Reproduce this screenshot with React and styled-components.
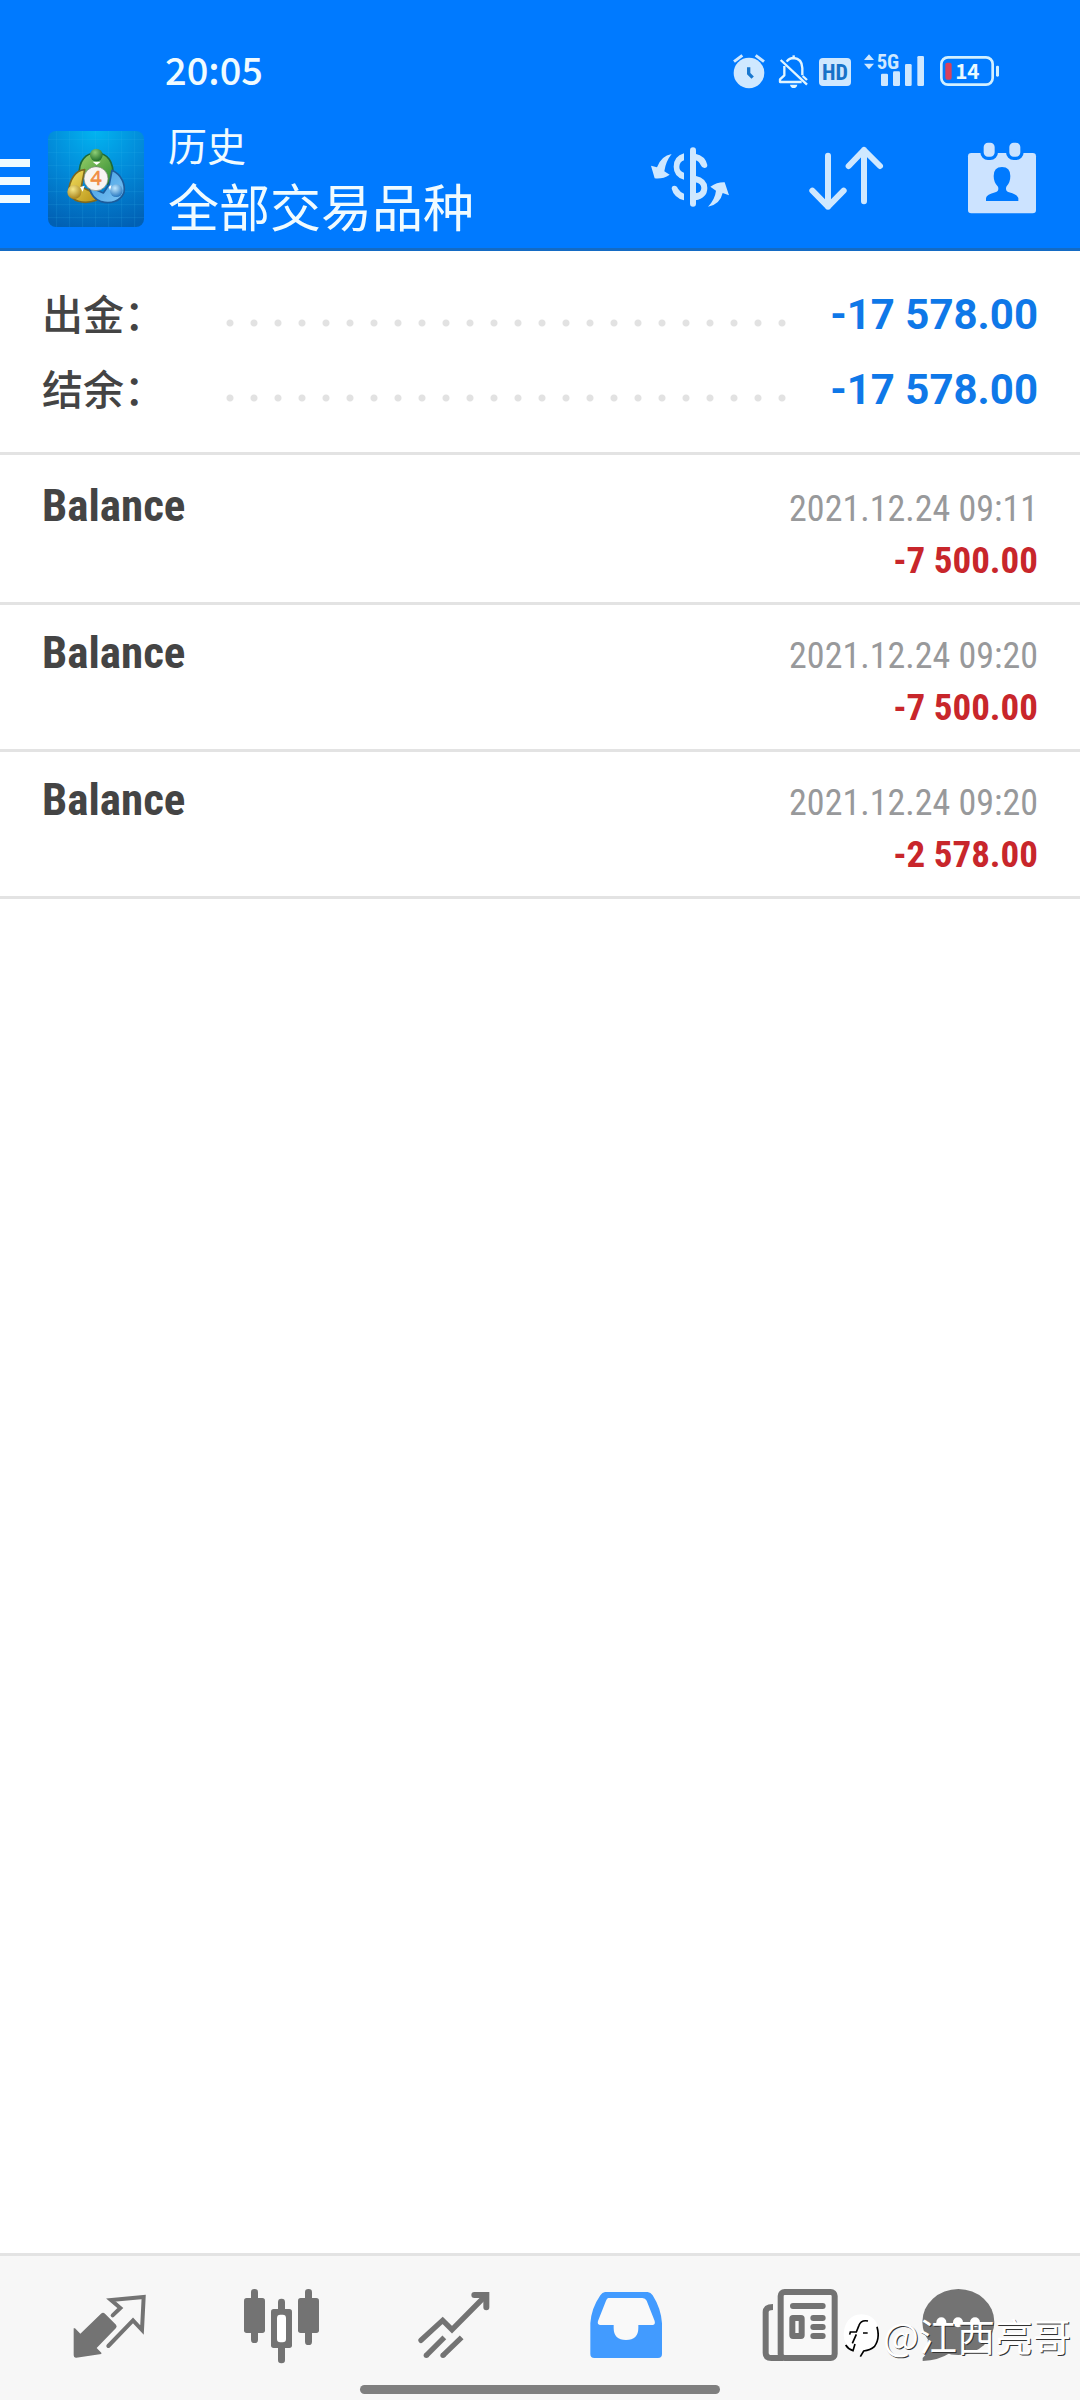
import React from "react";
import styled, { createGlobalStyle } from "styled-components";

const cjk = `"Noto Sans CJK SC", sans-serif`;
const roboto = `Roboto, "Noto Sans CJK SC", sans-serif`;
const condensed = `"Roboto Condensed", Roboto, sans-serif`;

const blue = "#007aff";
const pale = "#cfe8ff";
const ink = "#444444";
const grey = "#737373";
const rule = "#e3e3e3";

const GlobalStyle = createGlobalStyle`
  * { box-sizing: border-box; }
  body { margin: 0; background: #ffffff; font-family: ${cjk}; }
  button { padding: 0; border: 0; background: none; cursor: pointer; }
  svg { display: block; }
  dl, dd, dt, h1, p, ul { margin: 0; padding: 0; }
`;

const Screen = styled.div`
  display: flex;
  flex-direction: column;
  min-height: 100vh;
`;

/* ---------- header ---------- */

const Header = styled.header`
  background: ${blue};
  border-bottom: 3px solid #146bc4;
  color: #f0fbff;
`;

const StatusBar = styled.div`
  display: flex;
  align-items: center;
  justify-content: space-between;
  height: 110px;
  padding: 32px 80px 0 165px;
`;

const Clock = styled.time`
  padding-bottom: 4px;
  font-size: 38px;
  line-height: 48px;
  font-weight: 500;
`;

const StatusIcons = styled.div`
  display: flex;
  align-items: center;
  gap: 10px;
`;

const Toolbar = styled.div`
  display: flex;
  align-items: center;
  height: 138px;
`;

const MenuButton = styled.button`
  display: flex;
  flex-direction: column;
  gap: 10px;
  width: 30px;
  margin-right: 18px;
  padding-top: 4px;
`;

const MenuBar = styled.span`
  height: 8px;
  background: #f0fbff;
`;

const Titles = styled.div`
  flex: 1;
  padding-left: 24px;
`;

const Title = styled.p`
  font-size: 39px;
  line-height: 52px;
`;

const Subtitle = styled.h1`
  font-size: 51px;
  line-height: 70px;
  font-weight: 400;
`;

const ToolButton = styled.button`
  display: grid;
  place-items: center;
  width: 156px;
  height: 138px;
`;

/* ---------- summary ---------- */

const Summary = styled.dl`
  padding: 26px 42px 25px;
  border-bottom: 3px solid ${rule};
`;

const SummaryLine = styled.div`
  display: flex;
  align-items: center;
  height: 75px;
`;

const SummaryLabel = styled.dt`
  flex: 0 0 176px;
  padding-bottom: 6px;
  font-size: 41px;
  line-height: 60px;
  font-weight: 500;
  color: ${ink};
`;

const Leader = styled.span`
  flex: 1;
  height: 24px;
  margin-top: 16px;
  background: radial-gradient(circle, #e2e2e2 3px, transparent 4px) 0 0 / 24px 24px round;
`;

const SummaryValue = styled.dd`
  flex: 0 0 244px;
  text-align: right;
  font: 700 42px/60px ${roboto};
  color: #0f78e8;
`;

/* ---------- history ---------- */

const History = styled.ul`
  flex: 1;
  padding-top: 3px;
  list-style: none;
`;

const Entry = styled.li`
  display: flex;
  align-items: baseline;
  justify-content: space-between;
  height: 147px;
  padding: 22px 42px 0;
  border-bottom: 3px solid ${rule};
`;

const EntryName = styled.span`
  font: 700 45px/51px ${condensed};
  color: ${ink};
`;

const EntryInfo = styled.div`
  text-align: right;
  line-height: 51px;
  font-family: ${condensed};
`;

const EntryDate = styled.time`
  display: block;
  font-size: 36px;
  color: #98999b;
`;

const EntryAmount = styled.span`
  display: block;
  font-size: 37px;
  font-weight: 700;
  color: #c8262b;
`;

/* ---------- bottom navigation ---------- */

const Footer = styled.footer`
  position: relative;
  border-top: 3px solid ${rule};
  background: #f7f7f7;
  padding: 28px 22px 6px;
`;

const Nav = styled.nav`
  display: grid;
  grid-template-columns: repeat(6, 1fr);
`;

const NavButton = styled.button`
  display: grid;
  place-items: center;
  height: 84px;
  color: ${(p) => (p.$active ? "#429bff" : grey)};
`;

const HomeIndicator = styled.div`
  width: 360px;
  height: 9px;
  margin: 17px auto 0;
  border-radius: 5px;
  background: #7f7f7f;
`;

const Watermark = styled.div`
  position: absolute;
  right: 9px;
  top: 55px;
  display: flex;
  align-items: center;
  gap: 4px;
  font-size: 38px;
  line-height: 48px;
  color: #ffffff;
  text-shadow: 1px 1px 0 #333333;
  pointer-events: none;
`;

/* ---------- drawings ---------- */

const AlarmIcon = () => (
  <svg width="34" height="36" viewBox="336 39 102 108" aria-hidden="true">
    <circle cx="387" cy="99" r="46" fill={pale} />
    <path d="M342 65L367 46M432 65L407 46" stroke={pale} strokeWidth="9" />
    <path d="M386 82V101L398 113" fill="none" stroke="#1877cf" strokeWidth="10" />
  </svg>
);

const MutedIcon = () => (
  <svg width="32" height="36" viewBox="468 39 96 108" aria-hidden="true">
    <g fill="none" stroke="#e2f5ff" strokeWidth="7">
      <path d="M500 65Q508 54 521 54Q546 56 547 84V106M493 78V106L480 118V126H545" strokeLinejoin="round" />
      <path d="M521 46V56" />
      <path d="M482 60L561 134" />
      <path d="M548 108L561 120" />
    </g>
    <path d="M510 134H532Q530 144 521 144Q512 144 510 134Z" fill="#e2f5ff" />
  </svg>
);

const HdIcon = () => (
  <svg width="36" height="36" viewBox="594 39 108 108" aria-hidden="true">
    <rect x="597" y="54" width="96" height="84" rx="12" fill={pale} />
    <text x="645" y="121" textAnchor="middle" fontFamily="Roboto Condensed, Roboto, sans-serif" fontWeight="700" fontSize="66" fill="#1872c8">HD</text>
  </svg>
);

const SignalIcon = () => (
  <svg width="65" height="56" viewBox="732 9 195 168" aria-hidden="true">
    <path d="M747 43L762 60H732ZM747 88L762 71H732Z" fill={pale} />
    <text x="770" y="86" fontFamily="Roboto Condensed, Roboto, sans-serif" fontWeight="700" fontSize="62" fill={pale}>5G</text>
    <g fill={pale}>
      <rect x="783" y="101" width="21" height="37" rx="4" />
      <rect x="819" y="94" width="21" height="44" rx="4" />
      <rect x="855" y="72" width="20" height="66" rx="4" />
      <rect x="892" y="48" width="20" height="90" rx="4" />
    </g>
  </svg>
);

const BatteryIcon = () => (
  <svg width="61" height="36" viewBox="957 39 183 108" aria-hidden="true">
    <rect x="964" y="52" width="154" height="82" rx="20" fill="none" stroke="#d2f0ff" strokeWidth="8" />
    <rect x="1128" y="77" width="9" height="33" rx="4" fill="#d2f0ff" />
    <rect x="976" y="68" width="19" height="51" rx="6" fill="#d8405c" />
    <text x="1042" y="116" textAnchor="middle" fontFamily="Noto Sans CJK SC, sans-serif" fontWeight="700" fontSize="62" fill="#eafaff">14</text>
  </svg>
);

const AppLogo = () => (
  <svg width="96" height="96" viewBox="0 0 288 288" role="img" aria-label="MetaTrader 4">
    <defs>
      <radialGradient id="tile" cx="0.5" cy="0" r="1.05">
        <stop offset="0" stopColor="#02b4f0" />
        <stop offset="0.5" stopColor="#0289d8" />
        <stop offset="1" stopColor="#0160b4" />
      </radialGradient>
      <linearGradient id="leaf" x1="0" y1="0" x2="1" y2="1">
        <stop offset="0" stopColor="#9ad06a" />
        <stop offset="1" stopColor="#2c8a30" />
      </linearGradient>
      <linearGradient id="gold" x1="0" y1="0" x2="1" y2="1">
        <stop offset="0" stopColor="#f3e060" />
        <stop offset="1" stopColor="#b89216" />
      </linearGradient>
      <linearGradient id="sky" x1="0" y1="0" x2="1" y2="1">
        <stop offset="0" stopColor="#3f9be0" />
        <stop offset="1" stopColor="#7cc4f4" />
      </linearGradient>
      <radialGradient id="headGreen" cx="0.4" cy="0.3" r="0.7">
        <stop offset="0" stopColor="#8fcf76" />
        <stop offset="1" stopColor="#216f2b" />
      </radialGradient>
      <radialGradient id="headGold" cx="0.4" cy="0.3" r="0.7">
        <stop offset="0" stopColor="#f6e888" />
        <stop offset="1" stopColor="#a8841c" />
      </radialGradient>
      <radialGradient id="headSky" cx="0.4" cy="0.3" r="0.7">
        <stop offset="0" stopColor="#c0e8ff" />
        <stop offset="1" stopColor="#2878c0" />
      </radialGradient>
    </defs>
    <rect width="288" height="288" rx="24" fill="url(#tile)" />
    <path d="M26 0V288M65 0V288M104 0V288M143 0V288M182 0V288M221 0V288M260 0V288M0 26H288M0 65H288M0 104H288M0 143H288M0 182H288M0 221H288M0 260H288" stroke="#40b8f0" strokeOpacity="0.16" strokeWidth="3" />
    <path d="M94 130C92 90 112 66 145 66C178 66 198 92 195 138L180 160L145 108L112 134Z" fill="url(#leaf)" stroke="#1c6a38" strokeWidth="5" strokeLinejoin="round" />
    <path d="M110 116C82 118 64 146 62 182C70 210 104 222 146 208L126 180L100 168Z" fill="url(#gold)" stroke="#7c6820" strokeWidth="5" strokeLinejoin="round" />
    <path d="M192 118C222 132 232 160 228 184C218 210 190 220 160 212C142 206 128 190 124 168L166 186L184 160Z" fill="url(#sky)" stroke="#1c5c9c" strokeWidth="5" strokeLinejoin="round" />
    <path d="M134 92L158 92L146 102ZM96 168L110 164L104 182ZM182 168L190 162L188 182Z" fill="#ffffff" />
    <circle cx="145" cy="72" r="19" fill="url(#headGreen)" />
    <circle cx="79" cy="183" r="21" fill="url(#headGold)" />
    <circle cx="205" cy="179" r="19" fill="url(#headSky)" />
    <circle cx="144" cy="143" r="36" fill="#f8f4f2" stroke="#7c8a7c" strokeWidth="2" />
    <text x="144" y="163" textAnchor="middle" fontFamily="Open Sans, sans-serif" fontSize="58" fill="#f08c40" stroke="#f08c40" strokeWidth="2">4</text>
  </svg>
);

const DollarIcon = () => (
  <svg width="90" height="90" viewBox="75 282 270 270" aria-hidden="true">
    <path d="M219 331V491" stroke={pale} strokeWidth="18" strokeLinecap="round" />
    <path d="M192 340V361Q178 366 178 381Q178 394 192 398V419Q161 410 161 380Q161 349 192 340Z" fill={pale} />
    <path d="M155 446Q155 437 163 437Q171 437 174 446Q180 456 192 461V481Q162 473 155 446Z" fill={pale} />
    <path d="M226 341Q256 347 262 375Q262 384 253 384Q246 384 242 375Q237 363 226 361Z" fill={pale} />
    <path d="M226 407Q262 415 262 444Q262 474 226 481V460Q244 458 244 444Q244 431 226 427Z" fill={pale} />
    <path d="M155 342Q124 347 111 382L93 377L104 415Q128 418 149 404L133 394Q137 364 155 342Z" fill={pale} />
    <path d="M264 500Q285 478 288 452L271 440Q292 426 314 427L327 466L308 459Q300 494 264 500Z" fill={pale} />
  </svg>
);

const SortIcon = () => (
  <svg width="90" height="90" viewBox="543 282 270 270" aria-hidden="true">
    <path d="M624 347V500M577 452L624 500L671 452M732 484V330M686 378L732 330L780 378" fill="none" stroke={pale} strokeWidth="18" strokeLinecap="round" strokeLinejoin="round" />
  </svg>
);

const CalendarIcon = () => (
  <svg width="90" height="90" viewBox="1011 282 270 270" aria-hidden="true">
    <rect x="1044" y="339" width="204" height="181" rx="10" fill="#cce3ff" />
    <rect x="1086" y="303" width="43" height="52" rx="18" fill="#cce3ff" stroke={blue} strokeWidth="10" />
    <rect x="1163" y="303" width="43" height="52" rx="18" fill="#cce3ff" stroke={blue} strokeWidth="10" />
    <path d="M1098 483V474Q1100 464 1126 457Q1138 453 1134 440Q1121 428 1121 408Q1121 381 1146 381Q1171 381 1171 408Q1171 428 1159 440Q1155 453 1167 457Q1193 464 1195 474V483Z" fill={blue} />
  </svg>
);

const QuotesIcon = () => (
  <svg width="100" height="84" viewBox="25 132 300 252" aria-hidden="true">
    <path d="M154 221Q160 216 166 221L199 254Q203 259 199 264L141 324L155 338V342L80 353Q72 354 72 346V265H76L92 281Z" fill="currentColor" />
    <path d="M189 226L212 204L184 180L282 171L277 270L250 241L176 318" fill="none" stroke="currentColor" strokeWidth="12" strokeLinecap="round" strokeLinejoin="miter" />
  </svg>
);

const ChartIcon = () => (
  <svg width="100" height="84" viewBox="543 132 300 252" aria-hidden="true">
    <g fill="currentColor">
      <rect x="582" y="174" width="63" height="105" rx="8" />
      <rect x="744" y="174" width="63" height="105" rx="8" />
      <rect x="603" y="147" width="21" height="162" rx="10" />
      <rect x="765" y="147" width="21" height="168" rx="10" />
      <rect x="684" y="176" width="21" height="60" rx="10" />
      <rect x="684" y="300" width="21" height="70" rx="10" />
      <rect x="663" y="207" width="63" height="117" rx="8" />
    </g>
    <rect x="681" y="224" width="27" height="83" rx="10" fill="#ffffff" />
  </svg>
);

const TradeIcon = () => (
  <svg width="100" height="84" viewBox="1061 132 300 252" aria-hidden="true">
    <g fill="none" stroke="currentColor" strokeWidth="16">
      <path d="M1112 301L1177 241L1205 269L1308 165" strokeLinecap="round" />
      <path d="M1272 165H1308V202" strokeWidth="18" strokeLinecap="round" />
      <path d="M1128 346L1182 292M1178 346L1234 292" />
    </g>
    <circle cx="1128" cy="346" r="8" fill="currentColor" />
    <circle cx="1178" cy="346" r="8" fill="currentColor" />
  </svg>
);

const HistoryIcon = () => (
  <svg width="100" height="84" viewBox="19 132 300 252" aria-hidden="true">
    <path d="M106 156H234Q243 157 249 166Q274 205 277 250V342Q277 354 265 354H74Q62 354 62 342V250Q65 205 92 166Q98 157 106 156Z" fill="currentColor" />
    <path d="M116 174H218Q227 174 231 182L255 243Q258 255 248 255H206V264Q206 300 169 300Q132 300 132 264V255H91Q82 254 85 243L109 182Q112 174 116 174Z" fill="#f9f9f9" />
  </svg>
);

const NewsIcon = () => (
  <svg width="100" height="84" viewBox="537 132 300 252" aria-hidden="true">
    <g fill="none" stroke="currentColor" strokeWidth="18">
      <path d="M609 201Q587 201 587 217V338Q587 354 604 354H640" />
      <rect x="632" y="156" width="162" height="198" rx="12" fill="#f9f9f9" />
      <path d="M669 198H758M730 234H758M730 261H758M730 288H758" strokeLinecap="round" />
      <rect x="667" y="234" width="28" height="54" rx="2" fill="#f9f9f9" />
    </g>
  </svg>
);

const MessagesIcon = () => (
  <svg width="100" height="84" viewBox="1055 132 300 252" aria-hidden="true">
    <ellipse cx="1164" cy="246" rx="108" ry="99" fill="currentColor" />
    <path d="M1072 300Q1078 336 1057 354V363Q1105 361 1140 338Z" fill="currentColor" />
    <g fill="#ffffff">
      <circle cx="1113" cy="247" r="15" />
      <circle cx="1163" cy="247" r="15" />
      <circle cx="1214" cy="247" r="15" />
    </g>
  </svg>
);

const WatermarkLogo = () => (
  <svg width="36" height="46" viewBox="810 236 108 138" aria-hidden="true">
    <path d="M865 243C900 243 918 268 916 300C915 334 900 350 880 353Q874 356 862 370L864 352C836 350 812 336 812 306C812 270 832 243 865 243Z" fill="#ffffff" />
    <path d="M885 263Q864 259 858 276L850 296H832L830 304M850 303L838 330M870 299H884" fill="none" stroke="#000000" strokeWidth="5" />
    <path d="M912 280Q922 316 904 340Q892 351 872 353L862 370M818 335Q826 348 840 352L846 332" fill="none" stroke="#000000" strokeWidth="5" />
  </svg>
);

/* ---------- content ---------- */

const totals = [
  { label: "出金：", value: "-17 578.00" },
  { label: "结余：", value: "-17 578.00" },
];

const entries = [
  { name: "Balance", date: "2021.12.24 09:11", amount: "-7 500.00" },
  { name: "Balance", date: "2021.12.24 09:20", amount: "-7 500.00" },
  { name: "Balance", date: "2021.12.24 09:20", amount: "-2 578.00" },
];

const tabs = [
  { id: "行情", Icon: QuotesIcon },
  { id: "图表", Icon: ChartIcon },
  { id: "交易", Icon: TradeIcon },
  { id: "历史", Icon: HistoryIcon },
  { id: "新闻", Icon: NewsIcon },
  { id: "消息", Icon: MessagesIcon },
];

export default function App() {
  const [active, setActive] = React.useState("历史");
  return (
    <Screen>
      <GlobalStyle />
      <Header>
        <StatusBar>
          <Clock>20:05</Clock>
          <StatusIcons>
            <AlarmIcon />
            <MutedIcon />
            <HdIcon />
            <SignalIcon />
            <BatteryIcon />
          </StatusIcons>
        </StatusBar>
        <Toolbar>
          <MenuButton type="button" aria-label="菜单">
            <MenuBar />
            <MenuBar />
            <MenuBar />
          </MenuButton>
          <AppLogo />
          <Titles>
            <Title>历史</Title>
            <Subtitle>全部交易品种</Subtitle>
          </Titles>
          <ToolButton type="button" aria-label="品种"><DollarIcon /></ToolButton>
          <ToolButton type="button" aria-label="排序"><SortIcon /></ToolButton>
          <ToolButton type="button" aria-label="日期"><CalendarIcon /></ToolButton>
        </Toolbar>
      </Header>

      <Summary>
        {totals.map((t) => (
          <SummaryLine key={t.label}>
            <SummaryLabel>{t.label}</SummaryLabel>
            <Leader />
            <SummaryValue>{t.value}</SummaryValue>
          </SummaryLine>
        ))}
      </Summary>

      <History>
        {entries.map((e, i) => (
          <Entry key={i}>
            <EntryName>{e.name}</EntryName>
            <EntryInfo>
              <EntryDate>{e.date}</EntryDate>
              <EntryAmount>{e.amount}</EntryAmount>
            </EntryInfo>
          </Entry>
        ))}
      </History>

      <Footer>
        <Nav>
          {tabs.map(({ id, Icon }) => (
            <NavButton key={id} type="button" aria-label={id} $active={id === active} onClick={() => setActive(id)}>
              <Icon />
            </NavButton>
          ))}
        </Nav>
        <HomeIndicator />
        <Watermark>
          <WatermarkLogo />
          <span>@江西亮哥</span>
        </Watermark>
      </Footer>
    </Screen>
  );
}
